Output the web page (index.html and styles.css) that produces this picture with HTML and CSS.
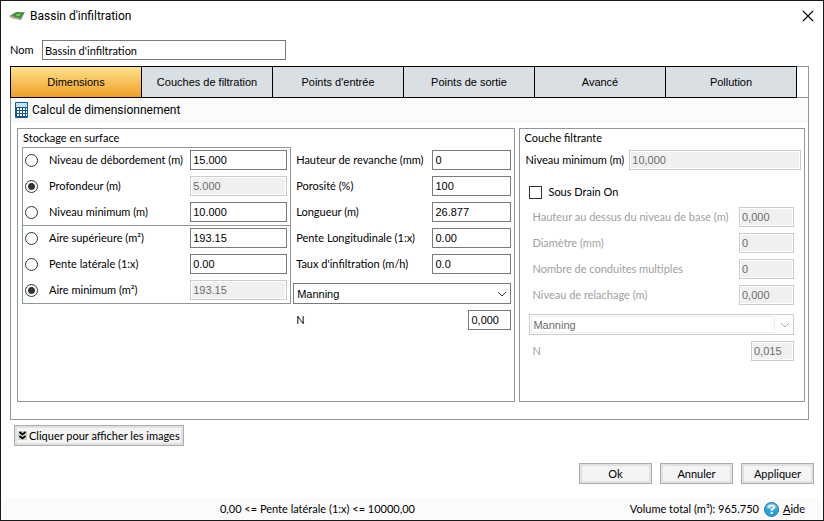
FILE: index.html
```html
<!DOCTYPE html>
<html lang="fr">
<head>
    <meta charset="UTF-8">
    <meta name="viewport" content="width=device-width, initial-scale=1.0">
    <title>Bassin d'infiltration</title>
    <link rel="stylesheet" href="styles.css">
</head>
<body>

    <div class="window">
        <header class="title-bar">
            <svg class="app-icon" width="16" height="10" viewBox="0 0 16 10">
                <path d="M0 5 L7 1 L16 1 L12 9 L3 7 Z" fill="#8c9a84"/>
                <path d="M3 4 L8 1 L15 2 L11 8 L4 6 Z" fill="#3f9142"/>
                <path d="M8 3 L12 3 L10 5 L7 5 Z" fill="#7ccf6c"/>
                <path d="M0 5 L3 5 L12 8 L12 9 L3 7 Z" fill="#b3a39a"/>
            </svg>
            <h1>Bassin d'infiltration</h1>
            <button class="close-button" aria-label="Fermer">
                <svg width="12" height="12" viewBox="0 0 12 12"><path d="M1 1 L11 11 M11 1 L1 11" stroke="#000" stroke-width="1.1" fill="none"/></svg>
            </button>
        </header>

        <div class="name-row">
            <label for="nom">Nom</label>
            <input type="text" id="nom" value="Bassin d'infiltration">
        </div>

        <main class="tab-control">
            <div class="tabs" role="tablist">
                <button class="tab active" role="tab" aria-selected="true">Dimensions</button>
                <button class="tab" role="tab">Couches de filtration</button>
                <button class="tab" role="tab">Points d'entrée</button>
                <button class="tab" role="tab">Points de sortie</button>
                <button class="tab" role="tab">Avancé</button>
                <button class="tab" role="tab">Pollution</button>
            </div>

            <div class="toolbar">
                <button class="tool-button">
                    <svg width="13" height="16" viewBox="0 0 13 16">
                        <rect x="0" y="0" width="13" height="16" rx="1" fill="#14588f"/>
                        <rect x="1" y="1" width="11" height="4" fill="#c5e3f7"/>
                        <path d="M2 6h2v2h-2z M5 6h2v2h-2z M8 6h2v2h-2z M11 6h1v2h-1z M2 9h2v2h-2z M5 9h2v2h-2z M8 9h2v2h-2z M11 9h1v2h-1z M2 12h2v2h-2z M5 12h2v2h-2z M8 12h2v2h-2z M11 12h1v2h-1z" fill="#fff"/>
                    </svg>
                    Calcul de dimensionnement
                </button>
            </div>

            <div class="panels">
                <section class="group storage">
                    <h2>Stockage en surface</h2>
                    <div class="columns">
                        <div class="choices">
                            <div class="choice-set">
                                <div class="row">
                                    <input type="radio" name="niveau" id="r-debordement">
                                    <label for="r-debordement" id="l-debordement">Niveau de débordement (m)</label>
                                    <input type="text" value="15.000" aria-labelledby="l-debordement">
                                </div>
                                <div class="row">
                                    <input type="radio" name="niveau" id="r-profondeur" checked>
                                    <label for="r-profondeur" id="l-profondeur">Profondeur (m)</label>
                                    <input type="text" value="5.000" aria-labelledby="l-profondeur" disabled>
                                </div>
                                <div class="row">
                                    <input type="radio" name="niveau" id="r-niveau">
                                    <label for="r-niveau" id="l-niveau">Niveau minimum (m)</label>
                                    <input type="text" value="10.000" aria-labelledby="l-niveau">
                                </div>
                            </div>
                            <div class="choice-set">
                                <div class="row">
                                    <input type="radio" name="aire" id="r-aire-sup">
                                    <label for="r-aire-sup" id="l-aire-sup">Aire supérieure (m²)</label>
                                    <input type="text" value="193.15" aria-labelledby="l-aire-sup">
                                </div>
                                <div class="row">
                                    <input type="radio" name="aire" id="r-pente">
                                    <label for="r-pente" id="l-pente">Pente latérale (1:x)</label>
                                    <input type="text" value="0.00" aria-labelledby="l-pente">
                                </div>
                                <div class="row">
                                    <input type="radio" name="aire" id="r-aire-min" checked>
                                    <label for="r-aire-min" id="l-aire-min">Aire minimum (m²)</label>
                                    <input type="text" value="193.15" aria-labelledby="l-aire-min" disabled>
                                </div>
                            </div>
                        </div>

                        <div class="fields">
                            <div class="row">
                                <label for="revanche">Hauteur de revanche (mm)</label>
                                <input type="text" id="revanche" value="0">
                            </div>
                            <div class="row">
                                <label for="porosite">Porosité (%)</label>
                                <input type="text" id="porosite" value="100">
                            </div>
                            <div class="row">
                                <label for="longueur">Longueur (m)</label>
                                <input type="text" id="longueur" value="26.877">
                            </div>
                            <div class="row">
                                <label for="pente-long">Pente Longitudinale (1:x)</label>
                                <input type="text" id="pente-long" value="0.00">
                            </div>
                            <div class="row">
                                <label for="taux">Taux d'infiltration (m/h)</label>
                                <input type="text" id="taux" value="0.0">
                            </div>
                            <div class="select-box">
                                <select aria-label="Formule de rugosité">
                                    <option>Manning</option>
                                </select>
                                <svg width="10" height="6" viewBox="0 0 10 6"><path d="M1 1 L5 5 L9 1" stroke="#333" fill="none"/></svg>
                            </div>
                            <div class="row">
                                <label for="n-surface">N</label>
                                <input type="text" class="short" id="n-surface" value="0,000">
                            </div>
                        </div>
                    </div>
                </section>

                <section class="group filter">
                    <h2>Couche filtrante</h2>
                    <div class="row level">
                        <label for="niveau-filtre">Niveau minimum (m)</label>
                        <input type="text" id="niveau-filtre" value="10,000" disabled>
                    </div>
                    <div class="check-row">
                        <input type="checkbox" id="sous-drain">
                        <label for="sous-drain">Sous Drain On</label>
                    </div>
                    <div class="drain">
                        <div class="row">
                            <label for="hauteur-base">Hauteur au dessus du niveau de base (m)</label>
                            <input type="text" id="hauteur-base" value="0,000" disabled>
                        </div>
                        <div class="row">
                            <label for="diametre">Diamètre (mm)</label>
                            <input type="text" id="diametre" value="0" disabled>
                        </div>
                        <div class="row">
                            <label for="conduites">Nombre de conduites multiples</label>
                            <input type="text" id="conduites" value="0" disabled>
                        </div>
                        <div class="row">
                            <label for="relachage">Niveau de relachage (m)</label>
                            <input type="text" id="relachage" value="0,000" disabled>
                        </div>
                        <div class="select-box disabled">
                            <select aria-label="Formule du drain" disabled>
                                <option>Manning</option>
                            </select>
                            <svg width="10" height="6" viewBox="0 0 10 6"><path d="M1 1 L5 5 L9 1" stroke="#aaa" fill="none"/></svg>
                        </div>
                        <div class="row">
                            <label for="n-drain">N</label>
                            <input type="text" class="short" id="n-drain" value="0,015" disabled>
                        </div>
                    </div>
                </section>
            </div>
        </main>

        <div class="image-toggle">
            <button class="push">
                <svg width="9" height="9" viewBox="0 0 9 9">
                    <rect width="9" height="9" fill="#cfcfcf"/>
                    <path d="M1.5 1 L4.5 3.5 L7.5 1 M1.5 5 L4.5 7.5 L7.5 5" stroke="#000" stroke-width="1.7" fill="none"/>
                </svg>
                Cliquer pour afficher les images
            </button>
        </div>

        <div class="actions">
            <button class="push">Ok</button>
            <button class="push">Annuler</button>
            <button class="push">Appliquer</button>
        </div>

        <footer class="status-bar">
            <span class="range">0,00 &lt;= Pente latérale (1:x) &lt;= 10000,00</span>
            <span>Volume total (m³): 965.750</span>
            <a href="#aide">
                <svg width="15" height="15" viewBox="0 0 15 15">
                    <circle cx="7.5" cy="7.5" r="7" fill="#2e9fdb" stroke="#2878a8"/>
                    <path d="M2 6 A5.6 5.6 0 0 1 13 6 Q7.500 8.500 2 6 Z" fill="#7cc9ee"/>
                    <path d="M5 5.600 Q5 3.500 7.500 3.500 Q10 3.500 10 5.500 Q10 7 7.600 7.600 V9" stroke="#fff" stroke-width="1.7" fill="none"/>
                    <rect x="6.700" y="10" width="2" height="2" fill="#fff"/>
                </svg>
                <span><u>A</u>ide</span>
            </a>
        </footer>
    </div>

</body>
</html>
```
FILE: styles.css
```css
/* General styling */
* {
    box-sizing: border-box;
}

body {
    margin: 0;
    font-family: Lato, Arial, sans-serif;
    font-size: 11px;
    line-height: 14px;
    color: #000;
    background: #fff;
}

button, input, select {
    font: inherit;
    color: inherit;
}

h1, h2 {
    margin: 0;
    font-size: inherit;
    font-weight: normal;
}

svg {
    flex: none;
}

.window {
    display: flex;
    flex-direction: column;
    min-height: 100vh;
    border: 1px solid #1a1a1a;
}

/* Title bar */
.title-bar {
    display: flex;
    align-items: center;
    height: 30px;
    padding: 0 5px 0 8px;
}

.title-bar h1 {
    flex: 1;
    margin-left: 5px;
    font-family: Roboto, sans-serif;
    font-size: 12px;
}

.close-button {
    display: flex;
    padding: 4px;
    border: none;
    background: none;
}

/* Fields */
input[type="text"] {
    height: 20px;
    padding: 0 2px;
    border: 1px solid #7a7a7a;
    background: #fff;
}

input[type="text"]:disabled {
    border-color: #ccc;
    background: #f0f0f0;
    color: #6d6d6d;
    box-shadow: inset 0 0 0 1px #fff;
}

.name-row {
    display: flex;
    align-items: center;
    padding: 9px 9px 6px;
}

.name-row label {
    width: 32px;
}

.name-row input {
    width: 244px;
}

.row {
    display: flex;
    align-items: center;
    justify-content: space-between;
}

.row input[type="text"] {
    flex: none;
    font-family: "Liberation Sans", Arial, sans-serif;
}

.row input.short {
    width: 43px;
}

input[type="radio"], input[type="checkbox"] {
    appearance: none;
    width: 13px;
    height: 13px;
    margin: 0;
    border: 1px solid #333;
    background: #fff;
}

input[type="radio"] {
    border-radius: 50%;
}

input[type="radio"]:checked {
    background: radial-gradient(circle, #333 3px, #fff 4px);
}

/* Tabs */
.tab-control {
    display: flex;
    flex: 1;
    flex-direction: column;
    margin: 0 14px 0 9px;
    border: 1px solid #8c979e;
}

.tabs {
    display: flex;
    margin: -1px 0 0 -1px;
    padding-right: 11px;
    border-bottom: 1px solid #8c979e;
    font-family: "Liberation Sans", Arial, sans-serif;
}

.tab {
    flex: 1;
    height: 32px;
    margin-bottom: -1px;
    padding: 0;
    border: 1px solid #000;
    border-left-width: 0;
    background: #dadfe3;
}

.tab:first-child {
    border-left-width: 1px;
}

.tab.active {
    background: linear-gradient(#fde28c, #f09f26);
}

.toolbar {
    height: 24px;
    padding: 4px 4px 0;
    border-bottom: 1px solid #f3f3f3;
    background: #fbfbfb;
}

.tool-button {
    display: flex;
    align-items: center;
    gap: 4px;
    padding: 0;
    border: none;
    background: none;
    font-family: Roboto, sans-serif;
    font-size: 12px;
    line-height: 16px;
}

/* Group boxes */
.panels {
    display: flex;
    flex: 1;
    gap: 4px;
    padding: 6px 3px 17px 6px;
}

.group {
    border: 1px solid #8c979e;
}

.group h2 {
    padding: 2px 5px;
}

.filter h2 {
    padding-left: 4px;
}

.storage {
    flex: 499;
}

.filter {
    flex: 285;
}

.columns {
    display: flex;
    gap: 2px;
    padding: 0 3px 0 4px;
}

.choices {
    flex: 268;
    align-self: flex-start;
    border: 1px solid #8c979e;
}

.choice-set {
    display: grid;
    gap: 6px;
    padding: 2px 3px 3px 2px;
}

.choice-set + .choice-set {
    border-top: 1px solid #8c979e;
}

.choice-set label {
    flex: 1;
    margin-left: 11px;
}

.choice-set input[type="text"] {
    width: 97px;
}

.fields {
    display: grid;
    flex: 219;
    gap: 6px;
    align-content: start;
    padding-top: 3px;
}

.fields label {
    margin-left: 3px;
}

.fields input {
    width: 79px;
}

.select-box {
    position: relative;
    display: flex;
    margin-top: 3px;
}

.select-box select {
    appearance: none;
    width: 100%;
    height: 21px;
    padding: 0 3px;
    border: 1px solid #7a7a7a;
    border-radius: 0;
    background: #fff;
    font-family: "Liberation Sans", Arial, sans-serif;
}

.select-box svg {
    position: absolute;
    top: 8px;
    right: 4px;
    pointer-events: none;
}

.select-box.disabled select {
    border-color: #ccc;
    color: #6d6d6d;
    opacity: 1;
}

/* Inner edge around the text part of a disabled list */
.select-box.disabled::after {
    content: "";
    position: absolute;
    inset: 2px 19px 2px 2px;
    border: 1px solid #eee;
    pointer-events: none;
}

.level {
    gap: 5px;
    padding: 3px 3px 0 5px;
}

.level input[type="text"] {
    flex: 1;
    width: 0;
}

.check-row {
    display: flex;
    align-items: center;
    gap: 6px;
    padding: 15px 9px 8px;
}

.drain {
    display: grid;
    gap: 6px;
    padding: 0 10px 0 9px;
    color: #a0a0a0;
}

.drain label {
    margin-left: 3px;
}

.drain input {
    width: 55px;
}

/* Buttons */
.push {
    display: flex;
    align-items: center;
    justify-content: center;
    height: 21px;
    padding: 0 3px;
    gap: 2px;
    border: 1px solid #adadad;
    background: #f4f4f4;
    box-shadow: inset 0 0 0 2px #e1e1e1;
}

.image-toggle {
    padding: 5px 13px 0;
}

.actions {
    display: flex;
    justify-content: flex-end;
    gap: 8px;
    padding: 17px 9px 14px;
}

.actions .push {
    width: 73px;
    padding: 0;
}

/* Status bar */
.status-bar {
    display: flex;
    align-items: center;
    gap: 5px;
    height: 22px;
    padding: 0 18px 0 9px;
    background: #fbfbfb;
}

.range {
    flex: 1;
    text-align: center;
}

.status-bar a {
    display: flex;
    align-items: center;
    gap: 4px;
    color: #000;
    text-decoration: none;
}
```
